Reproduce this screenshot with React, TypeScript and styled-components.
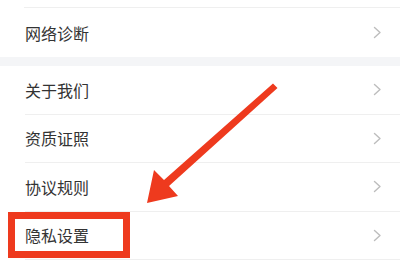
import React from "react";
import styled, { createGlobalStyle } from "styled-components";

const Global = createGlobalStyle`
  html, body { margin: 0; padding: 0; background: #ffffff; }
  body { font-family: "Noto Sans CJK SC", "Noto Sans", sans-serif; }
`;

const Page = styled.div`
  position: relative;
  width: 400px;
  height: 262px;
  overflow: hidden;
  background: #ffffff;
`;

const Section = styled.div`
  background: #ffffff;
`;

const Gap = styled.div`
  height: 9px;
  background: #f4f5f7;
`;

const CutRow = styled.div`
  height: 7px;
  margin-left: 24px;
  border-bottom: 1px solid #efefef;
`;

const Row = styled.div<{ $last?: boolean; $h: number }>`
  display: flex;
  align-items: center;
  justify-content: space-between;
  height: ${(p) => p.$h}px;
  box-sizing: border-box;
  margin-left: 25px;
  padding-right: 18px;
  border-bottom: ${(p) => (p.$last ? "none" : "1px solid #efefef")};
`;

const Label = styled.span`
  font-size: 16px;
  color: #333333;
  letter-spacing: 0px;
  line-height: 1;
`;

const Chevron = () => (
  <svg width="9" height="13" viewBox="0 0 9 13">
    <polyline points="1.5,1.5 7,6.5 1.5,11.5" fill="none" stroke="#bdbdbd" strokeWidth="1.4" strokeLinecap="round" strokeLinejoin="round" />
  </svg>
);

const Highlight = styled.div`
  position: absolute;
  left: 8px;
  top: 212px;
  width: 122px;
  height: 46px;
  box-sizing: border-box;
  border: 7px solid #ee3a1e;
`;

const ArrowLayer = styled.svg`
  position: absolute;
  left: 0;
  top: 0;
  pointer-events: none;
`;

const second = ["关于我们", "资质证照", "协议规则", "隐私设置"];

export default function App() {
  return (
    <>
      <Global />
      <Page>
        <Section>
          <CutRow />
          <Row $h={49} $last>
            <Label>网络诊断</Label>
            <Chevron />
          </Row>
        </Section>
        <Gap />
        <Section>
          {second.map((t, i) => (
            <Row key={t} $h={48.5}>
              <Label>{t}</Label>
              <Chevron />
            </Row>
          ))}
        </Section>
        <Highlight />
        <ArrowLayer width="400" height="262" viewBox="0 0 400 262">
          <polygon
            points="147,203 154,170 164,180 273,83.5 277.5,88 169,186 178,196"
            fill="#ee3a1e"
          />
        </ArrowLayer>
      </Page>
    </>
  );
}
